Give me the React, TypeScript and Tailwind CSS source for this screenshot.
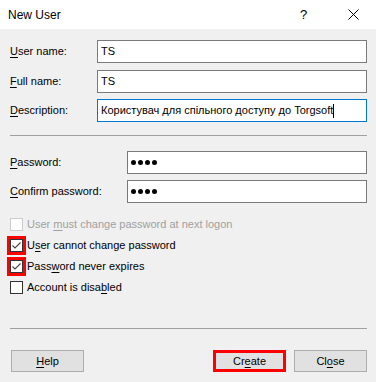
import React from "react";

function Acc({ pre = "", k, post = "" }: { pre?: string; k: string; post?: string }) {
  return (
    <span>
      {pre}
      <span className="underline underline-offset-[2px]">{k}</span>
      {post}
    </span>
  );
}

function Field({ label, value, active }: { label: React.ReactNode; value: string; active?: boolean }) {
  return (
    <div className="flex items-center h-[23px]">
      <div className="w-[87px] shrink-0">{label}</div>
      <div
        className={`flex-1 h-full bg-white flex items-center pl-[3px] border ${
          active ? "border-[#0078d7]" : "border-[#7a7a7a]"
        }`}
      >
        <span>{value}</span>
        {active && <span className="w-px h-[14px] bg-black" />}
      </div>
    </div>
  );
}

function PasswordField({ label }: { label: React.ReactNode }) {
  return (
    <div className="flex items-center h-[23px]">
      <div className="w-[117px] shrink-0">{label}</div>
      <div className="flex-1 h-full bg-white border border-[#7a7a7a] flex items-center gap-[2px] pl-[3px]">
        {[0, 1, 2, 3].map((i) => (
          <span key={i} className="w-[5px] h-[5px] rounded-full bg-black" />
        ))}
      </div>
    </div>
  );
}

function Check({ label, checked, disabled, marked }: { label: React.ReactNode; checked?: boolean; disabled?: boolean; marked?: boolean }) {
  return (
    <div className="flex items-center h-[21px]">
      <div
        className={`w-[19px] h-[19px] -ml-[3px] flex items-center justify-center ${
          marked ? "border-[3px] border-[#ff0000]" : ""
        }`}
      >
        <div
          className={`w-[13px] h-[13px] shrink-0 bg-white border flex items-center justify-center ${
            disabled ? "border-[#cccccc]" : "border-[#333333]"
          }`}
        >
          {checked && (
            <svg width="11" height="11" viewBox="0 0 11 11">
              <path d="M1.5 5.5 L4 8 L9.5 2.5" fill="none" stroke="#444" strokeWidth="1.1" />
            </svg>
          )}
        </div>
      </div>
      <div className={`ml-[1px] ${disabled ? "text-[#a0a0a0]" : ""}`}>{label}</div>
    </div>
  );
}

export default function App() {
  return (
    <div className="w-[376px] h-[382px] bg-[#f0f0f0] text-[11px] text-black flex flex-col" style={{ fontFamily: '"Liberation Sans", Arial, sans-serif' }}>
      <div className="h-[29px] bg-white flex items-center pl-[8px] shrink-0 text-[12px]">
        <span className="flex-1">New User</span>
        <span className="w-[12px] text-[13px] mr-[36px]">?</span>
        <svg width="11" height="11" viewBox="0 0 11 11" className="mr-[17px]">
          <path d="M0.5 0.5 L10.5 10.5 M10.5 0.5 L0.5 10.5" stroke="#000" strokeWidth="1" />
        </svg>
      </div>

      <div className="px-[10px] pr-[9px] flex flex-col">
        <div className="mt-[11px] flex flex-col gap-[7px]">
          <Field label={<Acc k="U" post="ser name:" />} value="TS" />
          <Field label={<Acc k="F" post="ull name:" />} value="TS" />
          <div className="-mt-[1px]">
            <Field label={<Acc k="D" post="escription:" />} value="Користувач для спільного доступу до Torgsoft" active />
          </div>
        </div>

        <div className="mt-[13px] h-px bg-[#a0a0a0]" />

        <div className="mt-[15px] flex flex-col gap-[6px]">
          <PasswordField label={<Acc k="P" post="assword:" />} />
          <PasswordField label={<Acc k="C" post="onfirm password:" />} />
        </div>

        <div className="mt-[11px] flex flex-col">
          <Check disabled label={<Acc pre="User " k="m" post="ust change password at next logon" />} />
          <Check checked marked label={<Acc pre="U" k="s" post="er cannot change password" />} />
          <Check checked marked label={<Acc pre="Pass" k="w" post="ord never expires" />} />
          <Check label={<Acc pre="Account is disa" k="b" post="led" />} />
        </div>

        <div className="mt-[30px] h-px bg-[#a0a0a0]" />

        <div className="mt-[21px] flex items-center">
          <button className="w-[73px] h-[22px] ml-px bg-[#e1e1e1] border border-[#adadad]">
            <Acc k="H" post="elp" />
          </button>
          <div className="flex-1" />
          <button className="w-[73px] h-[22px] bg-[#e1e1e1] border-[3px] border-[#ff0000]">
            <Acc pre="Cr" k="e" post="ate" />
          </button>
          <button className="w-[73px] h-[22px] ml-[8px] bg-[#e1e1e1] border border-[#adadad]">
            <Acc pre="Cl" k="o" post="se" />
          </button>
        </div>
      </div>
    </div>
  );
}
